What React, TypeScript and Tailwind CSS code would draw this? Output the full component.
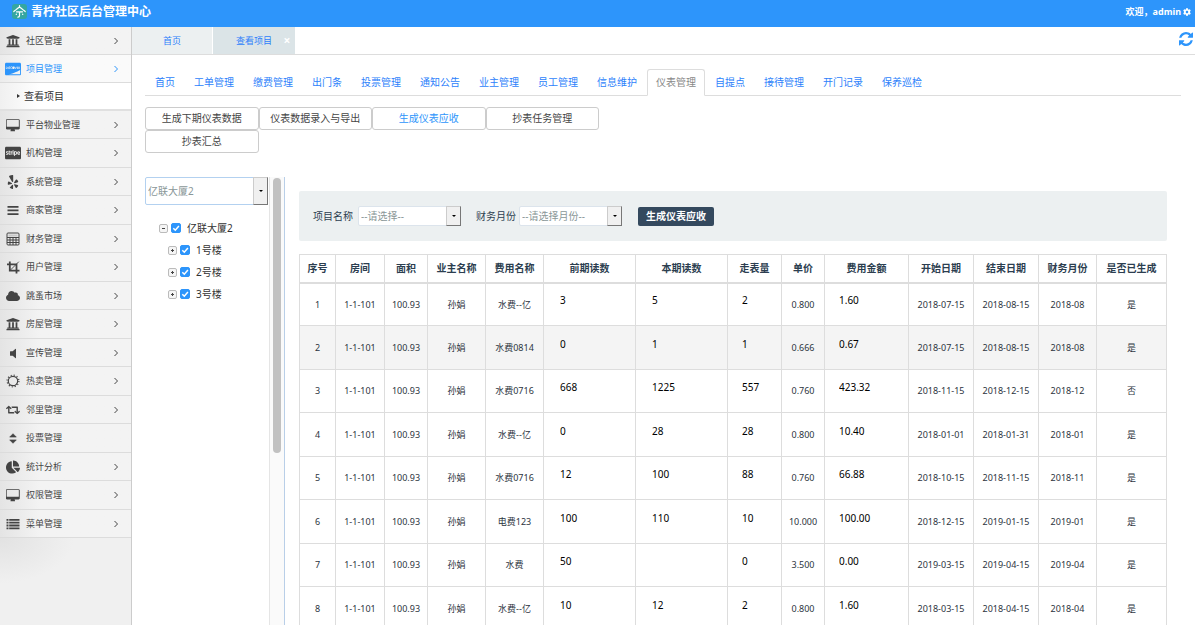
import React, { useState } from 'react';
import { FaUniversity, FaCcDiscover, FaCcStripe, FaYelp, FaCloud, FaRetweet, FaChartPie, FaCog } from 'react-icons/fa';

type IconProps = { className?: string };

function DesktopIcon({ className }: IconProps) {
  return (
    <svg viewBox="-32 0 1920 1600" className={className} fill="currentColor">
      <path d="M1728 992v-832q0-13-9.5-22.5t-22.5-9.5h-1600q-13 0-22.5 9.5t-9.5 22.5v832q0 13 9.5 22.5t22.5 9.5h1600q13 0 22.5-9.5t9.5-22.5zm128-832v1088q0 66-47 113t-113 47h-544q0 37 16 77.5t32 71 16 43.5q0 26-19 45t-45 19h-512q-26 0-45-19t-19-45q0-14 16-44t32-70 16-78h-544q-66 0-113-47t-47-113v-1088q0-66 47-113t113-47h1600q66 0 113 47t47 113z" />
    </svg>
  );
}

function RefreshIcon({ className }: IconProps) {
  return (
    <svg viewBox="128 128 1536 1536" className={className} fill="currentColor">
      <path d="M1639 1056q0 5-1 7-64 268-268 434.5t-478 166.5q-146 0-282.5-55t-243.5-157l-129 129q-19 19-45 19t-45-19-19-45v-448q0-26 19-45t45-19h448q26 0 45 19t19 45-19 45l-137 137q71 66 161 102t187 36q134 0 250-65t186-179q11-17 53-117 8-23 30-23h192q13 0 22.5 9.5t9.5 22.5zm25-800v448q0 26-19 45t-45 19h-448q-26 0-45-19t-19-45 19-45l138-138q-148-137-349-137-134 0-250 65t-186 179q-11 17-53 117-8 23-30 23h-199q-13 0-22.5-9.5t-9.5-22.5v-7q65-268 270-434.5t480-166.5q146 0 284 55.5t245 156.5l130-129q19-19 45-19t45 19 19 45z" />
    </svg>
  );
}

function BarsIcon({ className }: IconProps) {
  return (
    <svg viewBox="0 0 14 14" className={className} fill="currentColor">
      <path d="M1.5 3h11v1.7h-11zM1.5 6.6h11v1.7h-11zM1.5 10.2h11v1.7h-11z" />
    </svg>
  );
}

function ListIcon({ className }: IconProps) {
  return (
    <svg viewBox="0 0 14 14" className={className} fill="currentColor">
      <path d="M.5 2h2v1.8h-2zM3.2 2h10.3v1.8H3.2zM.5 4.8h2v1.8h-2zM3.2 4.8h10.3v1.8H3.2zM.5 7.6h2v1.8h-2zM3.2 7.6h10.3v1.8H3.2zM.5 10.4h2v1.8h-2zM3.2 10.4h10.3v1.8H3.2z" />
    </svg>
  );
}

function CalculatorIcon({ className }: IconProps) {
  return (
    <svg viewBox="0 0 14 14" className={className} fill="none" stroke="currentColor">
      <rect x="1" y="1" width="12" height="12" rx="1" />
      <path d="M2.5 3.5h9" strokeWidth="2" opacity=".2" />
      <path d="M1 5.5h12M1 8h12M1 10.5h12M4 5.5V13M7 5.5V13M10 5.5V13" />
    </svg>
  );
}

function CropIcon({ className }: IconProps) {
  return (
    <svg viewBox="0 0 14 14" className={className} fill="none" stroke="currentColor" strokeWidth="1.8">
      <path d="M1 4.3h9.500V13.500M3.800 1.500v9.200H13.500" />
      <path d="M3.800 10.700l9-9" strokeWidth=".9" />
    </svg>
  );
}

function VolumeIcon({ className }: IconProps) {
  return (
    <svg viewBox="0 0 14 14" className={className} fill="currentColor">
      <path d="M4.500 5.300h2.200L9.300 2.900q.7-.4.7.4v8.400q0 .8-.7.400L6.700 9.700H4.500q-.5 0-.5-.5V5.800q0-.5.500-.5z" />
    </svg>
  );
}

function SunIcon({ className }: IconProps) {
  return (
    <svg viewBox="0 0 14 14" className={className} fill="none" stroke="currentColor">
      <circle cx="7" cy="7" r="4.700" strokeWidth="1.200" />
      <circle cx="7" cy="7" r="5.900" strokeWidth="1.200" strokeDasharray="1.100 1.989" />
    </svg>
  );
}

function SortIcon({ className }: IconProps) {
  return (
    <svg viewBox="0 0 14 14" className={className} fill="currentColor" stroke="currentColor" strokeWidth=".6" strokeLinejoin="round">
      <path d="M7 2.700l3.300 3.400H3.700zM7 12.300l3.300-3.400H3.700z" />
    </svg>
  );
}

function Logo() {
  return (
    <svg viewBox="0 0 15 15" className="size-[15px]" fill="none" stroke="#fff" strokeLinecap="round">
      <rect width="15" height="15" rx="3" fill="#35a6a0" stroke="none" />
      <path d="M7.500 1.500v1.500M1.800 7.500Q3 6.500 7.500 3Q12 6.500 13.200 7.500M4.500 7.800h6M7.500 7.800v4q0 1.400-1.600 1.400" strokeWidth="1.200" />
      <path d="M4.300 10v.4M10.700 10v.4" strokeWidth="1.200" />
    </svg>
  );
}

const menu: { label: string; Icon: React.ComponentType<IconProps>; leaf?: boolean; open?: boolean; card?: boolean }[] = [
  { label: '社区管理', Icon: FaUniversity },
  { label: '项目管理', Icon: FaCcDiscover, open: true, card: true },
  { label: '平台物业管理', Icon: DesktopIcon },
  { label: '机构管理', Icon: FaCcStripe, card: true },
  { label: '系统管理', Icon: FaYelp },
  { label: '商家管理', Icon: BarsIcon },
  { label: '财务管理', Icon: CalculatorIcon },
  { label: '用户管理', Icon: CropIcon },
  { label: '跳蚤市场', Icon: FaCloud },
  { label: '房屋管理', Icon: FaUniversity },
  { label: '宣传管理', Icon: VolumeIcon },
  { label: '热卖管理', Icon: SunIcon },
  { label: '邻里管理', Icon: FaRetweet },
  { label: '投票管理', Icon: SortIcon, leaf: true },
  { label: '统计分析', Icon: FaChartPie },
  { label: '权限管理', Icon: DesktopIcon },
  { label: '菜单管理', Icon: ListIcon },
];

const navTabs = [
  '首页', '工单管理', '缴费管理', '出门条', '投票管理', '通知公告', '业主管理',
  '员工管理', '信息维护', '仪表管理', '自提点', '接待管理', '开门记录', '保养巡检',
];

const actions = ['生成下期仪表数据', '仪表数据录入与导出', '生成仪表应收', '抄表任务管理', '抄表汇总'];

const columns = [
  { title: '序号', width: 'w-[36px]' },
  { title: '房间', width: 'w-[49px]' },
  { title: '面积', width: 'w-[43px]' },
  { title: '业主名称', width: 'w-[58px]' },
  { title: '费用名称', width: 'w-[58px]' },
  { title: '前期读数', width: 'w-[92px]' },
  { title: '本期读数', width: 'w-[92px]' },
  { title: '走表量', width: 'w-[54px]' },
  { title: '单价', width: 'w-[43px]' },
  { title: '费用金额', width: 'w-[84px]' },
  { title: '开始日期', width: 'w-[65px]' },
  { title: '结束日期', width: 'w-[65px]' },
  { title: '财务月份', width: 'w-[58px]' },
  { title: '是否已生成', width: 'w-[70px]' },
];

const rows = [
  { fee: '水费--亿', prev: '3', curr: '5', used: '2', price: '0.800', amount: '1.60', start: '2018-07-15', end: '2018-08-15', month: '2018-08', done: '是' },
  { fee: '水费0814', prev: '0', curr: '1', used: '1', price: '0.666', amount: '0.67', start: '2018-07-15', end: '2018-08-15', month: '2018-08', done: '是' },
  { fee: '水费0716', prev: '668', curr: '1225', used: '557', price: '0.760', amount: '423.32', start: '2018-11-15', end: '2018-12-15', month: '2018-12', done: '否' },
  { fee: '水费--亿', prev: '0', curr: '28', used: '28', price: '0.800', amount: '10.40', start: '2018-01-01', end: '2018-01-31', month: '2018-01', done: '是' },
  { fee: '水费0716', prev: '12', curr: '100', used: '88', price: '0.760', amount: '66.88', start: '2018-10-15', end: '2018-11-15', month: '2018-11', done: '是' },
  { fee: '电费123', prev: '100', curr: '110', used: '10', price: '10.000', amount: '100.00', start: '2018-12-15', end: '2019-01-15', month: '2019-01', done: '是' },
  { fee: '水费', prev: '50', curr: '', used: '0', price: '3.500', amount: '0.00', start: '2019-03-15', end: '2019-04-15', month: '2019-04', done: '是' },
  { fee: '水费--亿', prev: '10', curr: '12', used: '2', price: '0.800', amount: '1.60', start: '2018-03-15', end: '2018-04-15', month: '2018-04', done: '是' },
];

function DropDown({ id, label, options, className }: { id: string; label?: string; options: string[]; className: string }) {
  return (
    <div className={`relative ${className}`}>
      <select id={id} aria-label={label} className="h-full w-full appearance-none rounded-xs border border-inherit bg-white pl-[2px] text-[10px] text-[#8a9798] outline-none">
        {options.map((o) => <option key={o}>{o}</option>)}
      </select>
      <span className="pointer-events-none absolute inset-y-0 right-0 flex w-[15px] items-center justify-center border border-[#ccc] border-r-[#777] border-b-[#777] bg-[#f0f0f0]">
        <span className="border-x-2 border-t-2 border-x-transparent border-t-black" />
      </span>
    </div>
  );
}

function TreeNode({ label, open, checked, onToggle }: { label: string; open?: boolean; checked: boolean; onToggle: () => void }) {
  return (
    <div className="flex h-[22px] items-center">
      <button aria-label={open ? '收起' : '展开'} className="flex size-[9px] items-center justify-center rounded-xs border border-[#bbb] bg-[#f5f5f5] text-[#444]">
        <svg viewBox="0 0 7 7" className="size-[7px]" stroke="currentColor">
          <path d={open ? 'M2 3.500h3' : 'M2 3.500h3M3.500 2v3'} />
        </svg>
      </button>
      <label className="ml-[3px] flex items-center text-[10px] text-[#333]">
        <span className="relative flex size-[10px]">
          <input type="checkbox" checked={checked} onChange={onToggle} className="peer size-[10px] appearance-none rounded-xs border border-[#2d95fb] checked:bg-[#2d95fb]" />
          <svg viewBox="0 0 10 10" className="pointer-events-none absolute inset-0 hidden size-[10px] peer-checked:block" fill="none" stroke="#fff" strokeWidth="1.500">
            <path d="M2.300 5.200l2 2 3.600-4.200" />
          </svg>
        </span>
        <span className="ml-[6px]">{label}</span>
      </label>
    </div>
  );
}

function ValueInput({ label, value, pad }: { label: string; value: string; pad: string }) {
  return (
    <input aria-label={label} defaultValue={value} className={`mb-2 block h-4 w-full bg-transparent text-[10px] text-black outline-none ${pad}`} />
  );
}

export default function App() {
  const [activeTab, setActiveTab] = useState('仪表管理');
  const [activeAction, setActiveAction] = useState('生成仪表应收');
  const [unchecked, setUnchecked] = useState<string[]>([]);

  function toggle(name: string) {
    setUnchecked((list) => (list.includes(name) ? list.filter((n) => n !== name) : [...list, name]));
  }

  return (
    <div className="flex h-screen flex-col overflow-hidden bg-white font-['Noto_Sans','Noto_Sans_CJK_SC',sans-serif] text-[10px] text-[#333]">
      {/* Top bar */}
      <header className="flex h-[27px] shrink-0 items-center justify-between bg-[#2d95fb] pr-1 pl-3 text-white">
        <div className="flex items-center gap-1 pb-1">
          <Logo />
          <h1 className="text-[12px] leading-4 font-bold">青柠社区后台管理中心</h1>
        </div>
        <button className="flex items-center gap-[2px] pb-1 text-[9px] font-bold">
          欢迎，admin
          <FaCog className="size-2" />
        </button>
      </header>

      <div className="flex min-h-0 grow">
        {/* Sidebar */}
        <nav className="w-[132px] shrink-0 border-r border-[#ccc] bg-[#f0f0f0]">
          <ul className="text-[9px]">
            {menu.map(({ label, Icon, leaf, open, card }) => (
              <li key={label} className="flex min-h-7 flex-col even:min-h-[29px]">
                <button className={`flex h-7 grow items-center border-b border-[#dcdcdc] bg-linear-to-r to-30% pr-[11px] pl-[5px] ${open ? 'from-[#ececec] to-[#fafafa] text-[#2d95fb]' : 'from-[#e4e4e4] to-[#f3f3f3] text-[#444]'}`}>
                  <span className="flex w-4 justify-center">
                    <Icon className={card ? 'size-4' : 'size-[14px]'} />
                  </span>
                  <span className="ml-[5px]">{label}</span>
                  {!leaf && (
                    <svg viewBox="0 0 8 8" className="ml-auto size-2" fill="none" stroke="currentColor">
                      <path d="M2.500 1l3 3-3 3" />
                    </svg>
                  )}
                </button>
                {open && (
                  <a href="#" className="flex h-7 items-center gap-1 border-b-2 border-[#e0e0e0] bg-linear-to-r from-[#f0f0f0] to-white to-30% pl-[17px] text-[10px] text-[#333]">
                    <span className="border-y-2 border-l-3 border-y-transparent border-l-[#333]" />
                    查看项目
                  </a>
                )}
              </li>
            ))}
          </ul>
          <div className="h-20 bg-radial-[at_0%_0%] from-[#e2e2e2] to-[#f0f0f0] to-40%" />
        </nav>

        <div className="flex min-w-0 grow flex-col">
          {/* Opened pages */}
          <div className="flex h-7 shrink-0 items-stretch border-b border-[#ddd] text-[9px] text-[#2d7ffb]">
            <button className="mr-px w-20 bg-[#ecf0f1]">首页</button>
            <div className="flex w-[82px] items-center bg-[#dbe4e7]">
              <button className="grow pl-3">查看项目</button>
              <button aria-label="关闭" className="mr-1 w-2 text-[12px] font-bold text-white">×</button>
            </div>
            <button aria-label="刷新" className="mr-[2px] ml-auto flex items-center pb-1 text-[#2d95fb]">
              <RefreshIcon className="size-[14px]" />
            </button>
          </div>

          <main className="flex min-h-0 grow flex-col pt-[14px] pr-[14px] pl-[13px]">
            <div className="flex h-[27px] shrink-0 gap-px border-b border-[#ddd] pl-px">
              {navTabs.map((tab) => (
                <button
                  key={tab}
                  onClick={() => setActiveTab(tab)}
                  className={`-mb-px h-[27px] rounded-t-[3px] border px-2 ${tab === activeTab ? 'border-[#ddd] border-b-white bg-white text-[#888]' : 'border-transparent text-[#2d7ffb]'}`}
                >
                  {tab}
                </button>
              ))}
            </div>

            <div className="mt-[11px] grid w-[454px] shrink-0 grid-cols-4">
              {actions.map((action) => (
                <button
                  key={action}
                  onClick={() => setActiveAction(action)}
                  className={`h-[23px] rounded-[3px] border border-[#ccc] bg-white ${action === activeAction ? 'text-[#2d95fb]' : 'text-[#444]'}`}
                >
                  {action}
                </button>
              ))}
            </div>

            <div className="mt-6 flex min-h-0 grow">
              {/* Building tree */}
              <div className="w-[124px] shrink-0">
                <DropDown id="project" label="项目" options={['亿联大厦2']} className="h-7 w-[123px] border-[#b3d1f0]" />
                <div className="pt-3 pl-[14px]">
                  <TreeNode label="亿联大厦2" open checked={!unchecked.includes('亿联大厦2')} onToggle={() => toggle('亿联大厦2')} />
                  <div className="pl-[9px]">
                    {['1号楼', '2号楼', '3号楼'].map((name) => (
                      <TreeNode key={name} label={name} checked={!unchecked.includes(name)} onToggle={() => toggle(name)} />
                    ))}
                  </div>
                </div>
              </div>
              <div className="w-4 shrink-0 border-r border-l border-l-[#e5e5e5] border-r-[#b9cfe8] bg-[#fafafa] px-[3px] pt-px">
                <div className="h-[275px] rounded-full bg-[#c1c1c1]" />
              </div>

              <section className="min-w-0 grow overflow-hidden pt-[14px] pr-[14px] pl-[14px]">
                <form className="flex h-[50px] items-center rounded-xs bg-[#ecf0f1] pl-[14px] text-[#2c3e50]">
                  <label htmlFor="item" className="mr-[5px]">项目名称</label>
                  <DropDown id="item" options={['--请选择--']} className="h-5 w-[103px] border-[#dce4ec]" />
                  <label htmlFor="month" className="mr-[3px] ml-[15px]">财务月份</label>
                  <DropDown id="month" options={['--请选择月份--']} className="h-5 w-[103px] border-[#dce4ec]" />
                  <button type="button" className="ml-4 h-[19px] rounded-xs bg-[#34495e] px-2 font-bold text-white">生成仪表应收</button>
                </form>

                <table className="mt-[13px] w-full table-fixed border-collapse text-center text-[9px] text-[#2c3440]">
                  <thead>
                    <tr className="h-7 text-[10px] text-[#2c3e50]">
                      {columns.map((c) => (
                        <th key={c.title} className={`border border-b-2 border-[#ddd] p-0 font-bold ${c.width}`}>{c.title}</th>
                      ))}
                    </tr>
                  </thead>
                  <tbody>
                    {rows.map((r, i) => (
                      <tr key={i} className={`h-[43px] even:h-[44px] *:border *:border-[#ddd] *:p-0 ${i === 1 ? 'bg-[#f4f4f4]' : ''}`}>
                        <td>{i + 1}</td>
                        <td>1-1-101</td>
                        <td>100.93</td>
                        <td>孙娟</td>
                        <td>{r.fee}</td>
                        <td><ValueInput label="前期读数" value={r.prev} pad="pl-4" /></td>
                        <td><ValueInput label="本期读数" value={r.curr} pad="pl-4" /></td>
                        <td><ValueInput label="走表量" value={r.used} pad="pl-[14px]" /></td>
                        <td>{r.price}</td>
                        <td><ValueInput label="费用金额" value={r.amount} pad="pl-[14px]" /></td>
                        <td>{r.start}</td>
                        <td>{r.end}</td>
                        <td>{r.month}</td>
                        <td>{r.done}</td>
                      </tr>
                    ))}
                  </tbody>
                </table>
              </section>
            </div>
          </main>
        </div>
      </div>
    </div>
  );
}
